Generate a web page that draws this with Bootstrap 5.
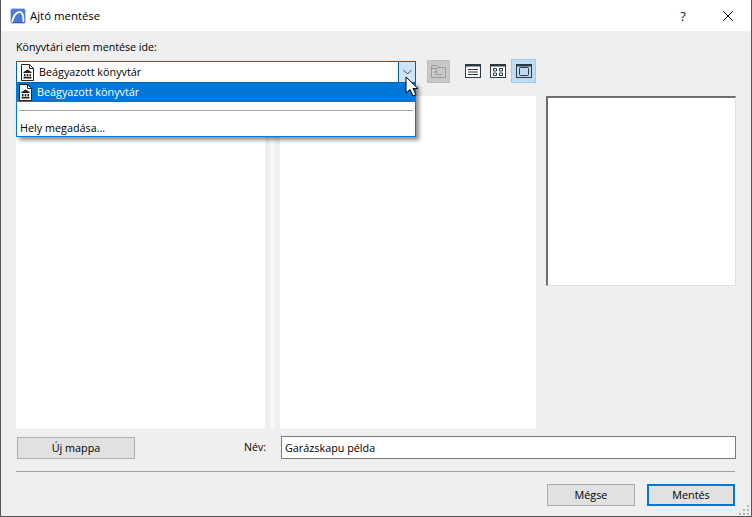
<!DOCTYPE html>
<html lang="hu"><head><meta charset="utf-8"><title>Ajtó mentése</title>
<link rel="stylesheet" href="https://cdn.jsdelivr.net/npm/bootstrap@5.3.0/dist/css/bootstrap.min.css">
<style>
html,body{margin:0;height:517px;overflow:hidden;background:#efefef}
body{font-family:"Open Sans","Noto Sans",sans-serif;font-size:10.8px;color:#000;line-height:1}
.dlg-win{width:752px;height:517px;border:1px solid #555;border-top:0;background:#efefef;position:relative}
.dlg-title{height:31px;background:#fff;padding:0 0 0 9px;font-size:11.4px}
.dlg-title .ttl{margin-left:4px;margin-top:1px}
.dlg-help{width:16px;margin-left:auto;margin-right:31px;font-size:13px;text-align:center;color:#222;margin-top:1px}
.dlg-x{margin-right:17px}
.dlg-body{padding:10px 15px 0 15px;height:484px}
.lbl{height:13px;line-height:13px;margin-bottom:6px;font-size:10.65px}
.top-row{height:24px}
.combo{width:400px;height:22px;background:#fff;border:1px solid #0063b1;position:relative;margin-top:1px}
.combo-text{padding-left:4px;gap:5px;flex:1}
.combo-arrow{width:17px;height:20px;background:#cce4f7;border-left:1px solid #005499}
.drop{position:absolute;left:-1px;top:21px;width:400px;height:54px;background:#fff;border:1px solid #0078d7;border-top:0;box-shadow:3px 3px 4px rgba(0,0,0,.45);z-index:5}
.drop-sel{height:19px;background:#0078d7;color:#fff;padding-left:2px;gap:5px}
.drop-sep{height:1px;background:#a0a0a0;margin:8px 2px 0 2px}
.drop-last{padding:12px 0 0 3px}
.tool-up{width:23px;height:23px;background:#c8c8c8;border:1px solid #bdbdbd;margin-left:11px}
.v1{margin-left:15px}
.v2{margin-left:9px}
.v3{width:25px;height:24px;background:#c0dcf3;border:1px solid #9ccaf0;margin-left:5px;margin-top:-1px}
.panels{margin-top:12px;height:333px}
.pane{background:#fff;height:333px}
.pane-a{width:249px}
.split{width:15px;padding:0 5px;height:333px}
.split div{height:100%;background:#f7f7f7}
.pane-b{width:256px}
.preview{width:190px;height:190px;margin-left:10px;background:#fff;border:solid;border-width:2px 1px 1px 2px;border-color:#6e6e6e #e0e0e0 #e0e0e0 #6e6e6e}
.btn-win{height:22px;background:#e1e1e1;border:1px solid #adadad;border-radius:0;font-size:10.8px;padding:0;color:#000;line-height:18px}
.btn-new{width:118px;margin-left:1px}
.form-row{margin-top:7px;height:23px}
.nev-l{width:22px;margin-left:109px;margin-right:15px;font-size:10.6px}
.nev-i{width:455px;height:23px;background:#fff;border:1px solid #7a7a7a;border-radius:0;padding:0 3px;font-size:10.8px;color:#000;box-shadow:none}
.hr-line{height:1px;background:#a0a0a0;margin-top:12px;width:719px}
.foot{margin-top:12px;width:719px;gap:12px}
.btn-foot{width:88px}
.btn-main{border:2px solid #0078d7;line-height:16px}
.cursor{position:absolute;left:404px;top:76px;z-index:9}
.grip{position:absolute;right:2px;bottom:1px}
</style></head><body>
<div class="dlg-win">
 <div class="dlg-title d-flex align-items-center">
  <svg width="16" height="16" viewBox="0 0 16 16"><rect x=".5" y=".5" width="15" height="15" rx="2" fill="#4a78e0" stroke="#c3cdea"/><path d="M2 14C3.500 8 6.500 4 10 4C12.500 4 13.500 8 13.500 14" fill="none" stroke="#fff" stroke-width="1.800"/><path d="M3 15H15V7L14.500 14H3Z" fill="#2a3f9a" opacity=".5"/></svg>
  <span class="ttl">Ajtó mentése</span>
  <span class="dlg-help">?</span>
  <svg class="dlg-x" width="12" height="12" viewBox="0 0 12 12"><path d="M1 1L11 11M11 1L1 11" stroke="#111" stroke-width="1"/></svg>
 </div>
 <div class="dlg-body">
  <div class="lbl">Könyvtári elem mentése ide:</div>
  <div class="top-row d-flex align-items-start">
   <div class="combo d-flex">
    <div class="combo-text d-flex align-items-center">
     <svg width="13" height="17" viewBox="0 0 13 17"><path d="M.5.5H8.500L12.500 4.500V16.500H.5Z" fill="#fff" stroke="#222"/><path d="M8.500.5V4.500H12.500" fill="none" stroke="#222"/><path d="M6.500 5.500L2.500 8V9H10.500V8ZM3 10H4.500V12.500H3ZM5.700 10H7.300V12.500H5.700ZM8.500 10H10V12.500H8.500ZM2.500 13H10.500V14.500H2.500Z" fill="#222"/></svg>
     <span>Beágyazott könyvtár</span>
    </div>
    <div class="combo-arrow d-flex align-items-center justify-content-center">
     <svg width="9" height="6" viewBox="0 0 9 6"><path d="M.5 1L4.500 5L8.500 1" fill="none" stroke="#444"/></svg>
    </div>
    <div class="drop">
     <div class="drop-sel d-flex align-items-center">
      <svg width="13" height="17" viewBox="0 0 13 17"><path d="M.5.5H8.500L12.500 4.500V16.500H.5Z" fill="#fff" stroke="#222"/><path d="M8.500.5V4.500H12.500" fill="none" stroke="#222"/><path d="M6.500 5.500L2.500 8V9H10.500V8ZM3 10H4.500V12.500H3ZM5.700 10H7.300V12.500H5.700ZM8.500 10H10V12.500H8.500ZM2.500 13H10.500V14.500H2.500Z" fill="#222"/></svg>
      <span>Beágyazott könyvtár</span>
     </div>
     <div class="drop-sep"></div>
     <div class="drop-last">Hely megadása...</div>
    </div>
   </div>
   <div class="tool-up d-flex align-items-center justify-content-center">
    <svg width="15" height="13" viewBox="0 0 15 13"><path d="M.5 12.500V.5H6L7.500 2.500H14.500V12.500Z" fill="none" stroke="#9a9a9a"/><path d="M.5 3.500H7M5 9.500H11M5 9.500V6M3.500 7.500L5 5.500L6.500 7.500" fill="none" stroke="#9a9a9a"/></svg>
   </div>
   <svg class="v1 mt-1" width="16" height="14" viewBox="0 0 16 14"><rect x=".5" y=".5" width="15" height="13" fill="#fff" stroke="#2b3a45"/><path d="M3 5.500H13M3 8H13M3 10.500H13" stroke="#2b3a45"/><path d="M1 1.500H15" stroke="#2b3a45" stroke-width="2"/></svg>
   <svg class="v2 mt-1" width="16" height="14" viewBox="0 0 16 14"><rect x=".5" y=".5" width="15" height="13" fill="#fff" stroke="#2b3a45"/><path d="M1 1.500H15" stroke="#2b3a45" stroke-width="2"/><path d="M3.500 4.500H6.500V7H3.500ZM9.500 4.500H12.500V7H9.500ZM3.500 9H6.500V11.500H3.500ZM9.500 9H12.500V11.500H9.500Z" fill="none" stroke="#2b3a45"/></svg>
   <div class="v3 d-flex align-items-center justify-content-center">
    <svg width="16" height="14" viewBox="0 0 16 14"><rect x=".5" y=".5" width="15" height="13" fill="none" stroke="#2b3a45"/><path d="M1 1.500H15" stroke="#2b3a45" stroke-width="2"/><rect x="3.500" y="3.500" width="9" height="8" rx="1" fill="none" stroke="#2b3a45"/></svg>
   </div>
  </div>
  <div class="panels d-flex align-items-start">
   <div class="pane pane-a"></div>
   <div class="split"><div></div></div>
   <div class="pane pane-b"></div>
   <div class="preview"></div>
  </div>
  <div class="form-row d-flex align-items-center">
   <button class="btn btn-win btn-new" type="button">Új mappa</button>
   <label class="nev-l" for="nev">Név:</label>
   <input id="nev" class="form-control nev-i" value="Garázskapu példa">
  </div>
  <div class="hr-line"></div>
  <div class="foot d-flex justify-content-end">
   <button class="btn btn-win btn-foot" type="button">Mégse</button>
   <button class="btn btn-win btn-foot btn-main" type="button">Mentés</button>
  </div>
 </div>
 <svg class="cursor" width="15" height="22" viewBox="0 0 15 22"><path d="M1 1V17L5 13.500L8 20L11 18.700L8 12.500H13Z" fill="#fff" stroke="#000"/></svg>
 <svg class="grip" width="10" height="10" viewBox="0 0 10 10"><path d="M8 0h2v2H8zM4 4h2v2H4zM8 4h2v2H8zM0 8h2v2H0zM4 8h2v2H4zM8 8h2v2H8z" fill="#b5b5b5"/></svg>
</div>
</body></html>
